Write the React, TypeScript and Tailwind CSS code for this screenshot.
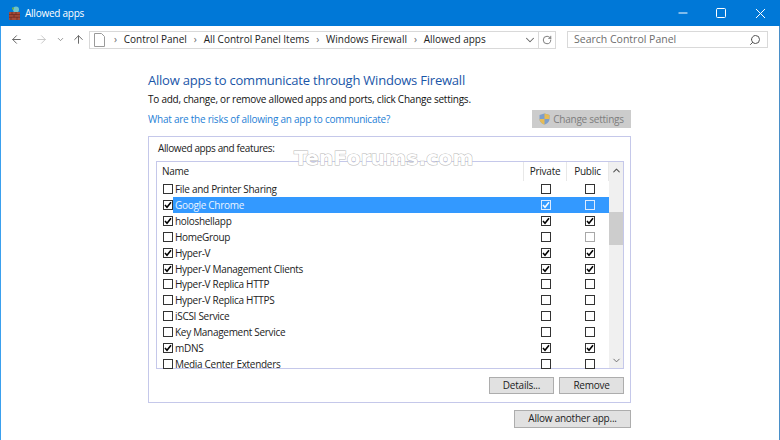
import { ArrowLeft, ArrowRight, ArrowUp, ChevronDown, ChevronUp, Minus, RotateCw, Search, Square, X } from 'lucide-react'

const font = 'font-["Open_Sans","Noto_Sans",sans-serif]'

interface Row {
  name: string
  on: boolean
  priv: boolean
  pub: boolean
  selected?: boolean
  pubDisabled?: boolean
}

const rows: Row[] = [
  { name: 'File and Printer Sharing', on: false, priv: false, pub: false },
  { name: 'Google Chrome', on: true, priv: true, pub: false, selected: true },
  { name: 'holoshellapp', on: true, priv: true, pub: true },
  { name: 'HomeGroup', on: false, priv: false, pub: false, pubDisabled: true },
  { name: 'Hyper-V', on: true, priv: true, pub: true },
  { name: 'Hyper-V Management Clients', on: true, priv: true, pub: true },
  { name: 'Hyper-V Replica HTTP', on: false, priv: false, pub: false },
  { name: 'Hyper-V Replica HTTPS', on: false, priv: false, pub: false },
  { name: 'iSCSI Service', on: false, priv: false, pub: false },
  { name: 'Key Management Service', on: false, priv: false, pub: false },
  { name: 'mDNS', on: true, priv: true, pub: true },
  { name: 'Media Center Extenders', on: false, priv: false, pub: false },
]

function Check({ on, tone = 'normal' }: { on: boolean; tone?: 'normal' | 'light' | 'disabled' }) {
  const box =
    tone === 'light' ? 'border-[#dcebff]' : tone === 'disabled' ? 'border-[#a8a8a8]' : 'border-[#333]'
  const tick = tone === 'light' ? '#f4f9ff' : '#000'
  return (
    <span className={`flex h-[10px] w-[10px] shrink-0 items-center justify-center border ${box}`}>
      {on && (
        <svg width="8" height="8" viewBox="0 0 8 8" fill="none">
          <path d="M1 4 L3 6.2 L7 1.2" stroke={tick} strokeWidth="1.6" />
        </svg>
      )}
    </span>
  )
}

function AppRow({ row }: { row: Row }) {
  return (
    <div className="flex h-[15.85px] items-center">
      <div className="flex w-[16px] justify-end">
        <Check on={row.on} />
      </div>
      <div className={`flex h-full flex-1 items-center ${row.selected ? 'bg-[#3399ff] text-[#eaf4ff]' : 'text-[#222]'}`}>
        <span className="flex-1 pl-[2px] text-[10px] leading-none tracking-[-0.3px]">{row.name}</span>
        <div className="flex w-[44px] justify-center pl-[2px]">
          <Check on={row.priv} tone={row.selected ? 'light' : 'normal'} />
        </div>
        <div className="flex w-[42px] justify-center pl-[3px]">
          <Check on={row.pub} tone={row.selected ? 'light' : row.pubDisabled ? 'disabled' : 'normal'} />
        </div>
      </div>
    </div>
  )
}

function Crumb({ label }: { label: string }) {
  return (
    <>
      <span className="text-[10px] text-[#666]">›</span>
      <span className="mx-[7px] text-[10px] tracking-normal text-[#222]">{label}</span>
    </>
  )
}

function GrayButton({ label, width }: { label: string; width: string }) {
  return (
    <button className={`flex h-[17.5px] items-center justify-center border border-[#adadad] bg-[#e1e1e1] text-[10px] text-[#222] ${width}`}>
      {label}
    </button>
  )
}

export default function App() {
  return (
    <div className={`relative h-[440px] w-[780px] overflow-hidden bg-white tracking-[-0.24px] ${font}`}>
      {/* title bar */}
      <div className="flex h-[26px] items-center bg-[#0078d7] pl-[8px] text-white">
        <svg width="14" height="15" viewBox="0 0 14 15">
          <circle cx="8" cy="3.5" r="3" fill="#6fc2c8" />
          <path d="M4 1.5h2v2H4z" fill="#6fb04a" />
          <rect x="1" y="6" width="11" height="8" fill="#a34a3a" />
          <path d="M1 8.6h11M1 11.2h11M4 6v2.6M8 6v2.6M6 8.6v2.6M3 11.2V14M9 11.2V14" stroke="#5c2219" strokeWidth="0.6" />
        </svg>
        <span className="ml-[3px] text-[10px]">Allowed apps</span>
        <div className="ml-auto flex items-center">
          <div className="flex w-[36px] justify-center"><Minus size={14} strokeWidth={1} absoluteStrokeWidth /></div>
          <div className="flex w-[39px] justify-center"><Square size={12} strokeWidth={1} absoluteStrokeWidth /></div>
          <div className="flex w-[40px] justify-center"><X size={17} strokeWidth={1} absoluteStrokeWidth /></div>
        </div>
      </div>

      <div className="h-[414px] border-x border-l-[#3aa0ee] border-r-[#4a8fc8]">
        {/* address bar */}
        <div className="flex h-[26px] items-center pl-[9px] pr-[11px]">
          <ArrowLeft size={13} strokeWidth={1.8} className="text-[#666]" />
          <ArrowRight size={13} strokeWidth={1.8} className="ml-[12px] text-[#c8c8c8]" />
          <ChevronDown size={9} strokeWidth={2} className="ml-[8px] text-[#777]" />
          <ArrowUp size={13} strokeWidth={1.8} className="ml-[7px] text-[#666]" />
          <div className="ml-[4px] mt-[1px] flex h-[18px] w-[467px] items-center border border-[#d9d9d9] pl-[4px]">
            <svg width="11" height="14" viewBox="0 0 11 14" fill="none" className="mr-[9px]">
              <path d="M0.5 0.5h7l3 3v10h-10z" fill="#fff" stroke="#9a9a9a" />
            </svg>
            <Crumb label="Control Panel" />
            <Crumb label="All Control Panel Items" />
            <Crumb label="Windows Firewall" />
            <Crumb label="Allowed apps" />
            <ChevronDown size={14} strokeWidth={1.8} className="ml-auto mr-[1px] text-[#666]" />
            <div className="flex h-full w-[17px] items-center justify-center border-l border-[#d9d9d9]">
              <RotateCw size={10} strokeWidth={2} className="text-[#666]" />
            </div>
          </div>
          <div className="ml-auto mt-[1px] flex h-[17px] w-[201px] items-center border border-[#d9d9d9] pl-[6px] pr-[6px]">
            <span className="text-[10.5px] tracking-normal text-[#6d6d6d]">Search Control Panel</span>
            <Search size={12} strokeWidth={2} className="ml-auto -scale-x-100 text-[#555]" />
          </div>
        </div>

        {/* main */}
        <div className="ml-[147px] w-[483px] pt-[19px]">
          <h1 className="h-[19px] text-[13px] leading-[19px] tracking-[-0.22px] text-[#1a56a8]">Allow apps to communicate through Windows Firewall</h1>
          <p className="mt-[2px] h-[14px] text-[10px] leading-[14px] text-[#111]">To add, change, or remove allowed apps and ports, click Change settings.</p>
          <div className="mt-[4px] flex h-[18px] items-center justify-between">
            <span className="text-[10px] text-[#1f7fd6]">What are the risks of allowing an app to communicate?</span>
            <button className="flex h-[18px] w-[99px] items-center justify-center gap-[3px] bg-[#cccccc] text-[10px] text-[#7d7d7d]">
              <svg width="11" height="12" viewBox="0 0 11 12">
                <path d="M5.5 0.5 L10.5 2 V6 C10.5 9 8 10.8 5.5 11.5 C3 10.8 0.5 9 0.5 6 V2 Z" fill="#7d9ecb" />
                <path d="M5.5 0.5 L10.5 2 V6 H5.5 Z M5.5 6 V11.5 C3 10.8 0.5 9 0.5 6 Z" fill="#e6bb55" />
              </svg>
              Change settings
            </button>
          </div>

          <div className="mt-[8px] h-[267px] border border-[#c5c8ea] pl-[7px] pr-[6px] pt-[4px]">
            <div className="h-[20px] pl-[2px] text-[10px] leading-[14px] tracking-[-0.38px] text-[#222]">Allowed apps and features:</div>
            <div className="flex h-[208px] border border-[#c5c8ea]">
              <div className="flex-1">
                <div className="flex h-[19px] items-center text-[10px] text-[#222]">
                  <span className="flex-1 pl-[5px]">Name</span>
                  <span className="flex h-full w-[44px] items-center justify-center border-x border-[#e8e8e8]">Private</span>
                  <span className="flex h-full w-[42px] items-center justify-center border-r border-[#e8e8e8]">Public</span>
                </div>
                <div className="mt-[0.5px]">
                  {rows.map((row) => (
                    <AppRow key={row.name} row={row} />
                  ))}
                </div>
              </div>
              <div className="flex w-[14px] flex-col items-center bg-[#f0f0f0]">
                <ChevronUp size={11} strokeWidth={2.4} className="mt-[3px] text-[#555]" />
                <div className="mt-[36px] h-[33px] w-full bg-[#cdcdcd]" />
                <ChevronDown size={11} strokeWidth={2} className="mt-auto mb-[2px] text-[#666]" />
              </div>
            </div>
            <div className="mt-[7.5px] flex justify-end gap-[5px]">
              <GrayButton label="Details..." width="w-[65px]" />
              <GrayButton label="Remove" width="w-[65px]" />
            </div>
          </div>

          <div className="mt-[7px] flex justify-end">
            <GrayButton label="Allow another app..." width="w-[117px]" />
          </div>
        </div>
      </div>

      {/* watermark */}
      <div className='absolute left-[294px] top-[145px] font-["DejaVu_Sans"] text-[20px] leading-[26px] font-bold tracking-[0.25px] text-white [-webkit-text-stroke:1px_#b8b8b8] [paint-order:stroke_fill]'>
        TenForums.com
      </div>
    </div>
  )
}
